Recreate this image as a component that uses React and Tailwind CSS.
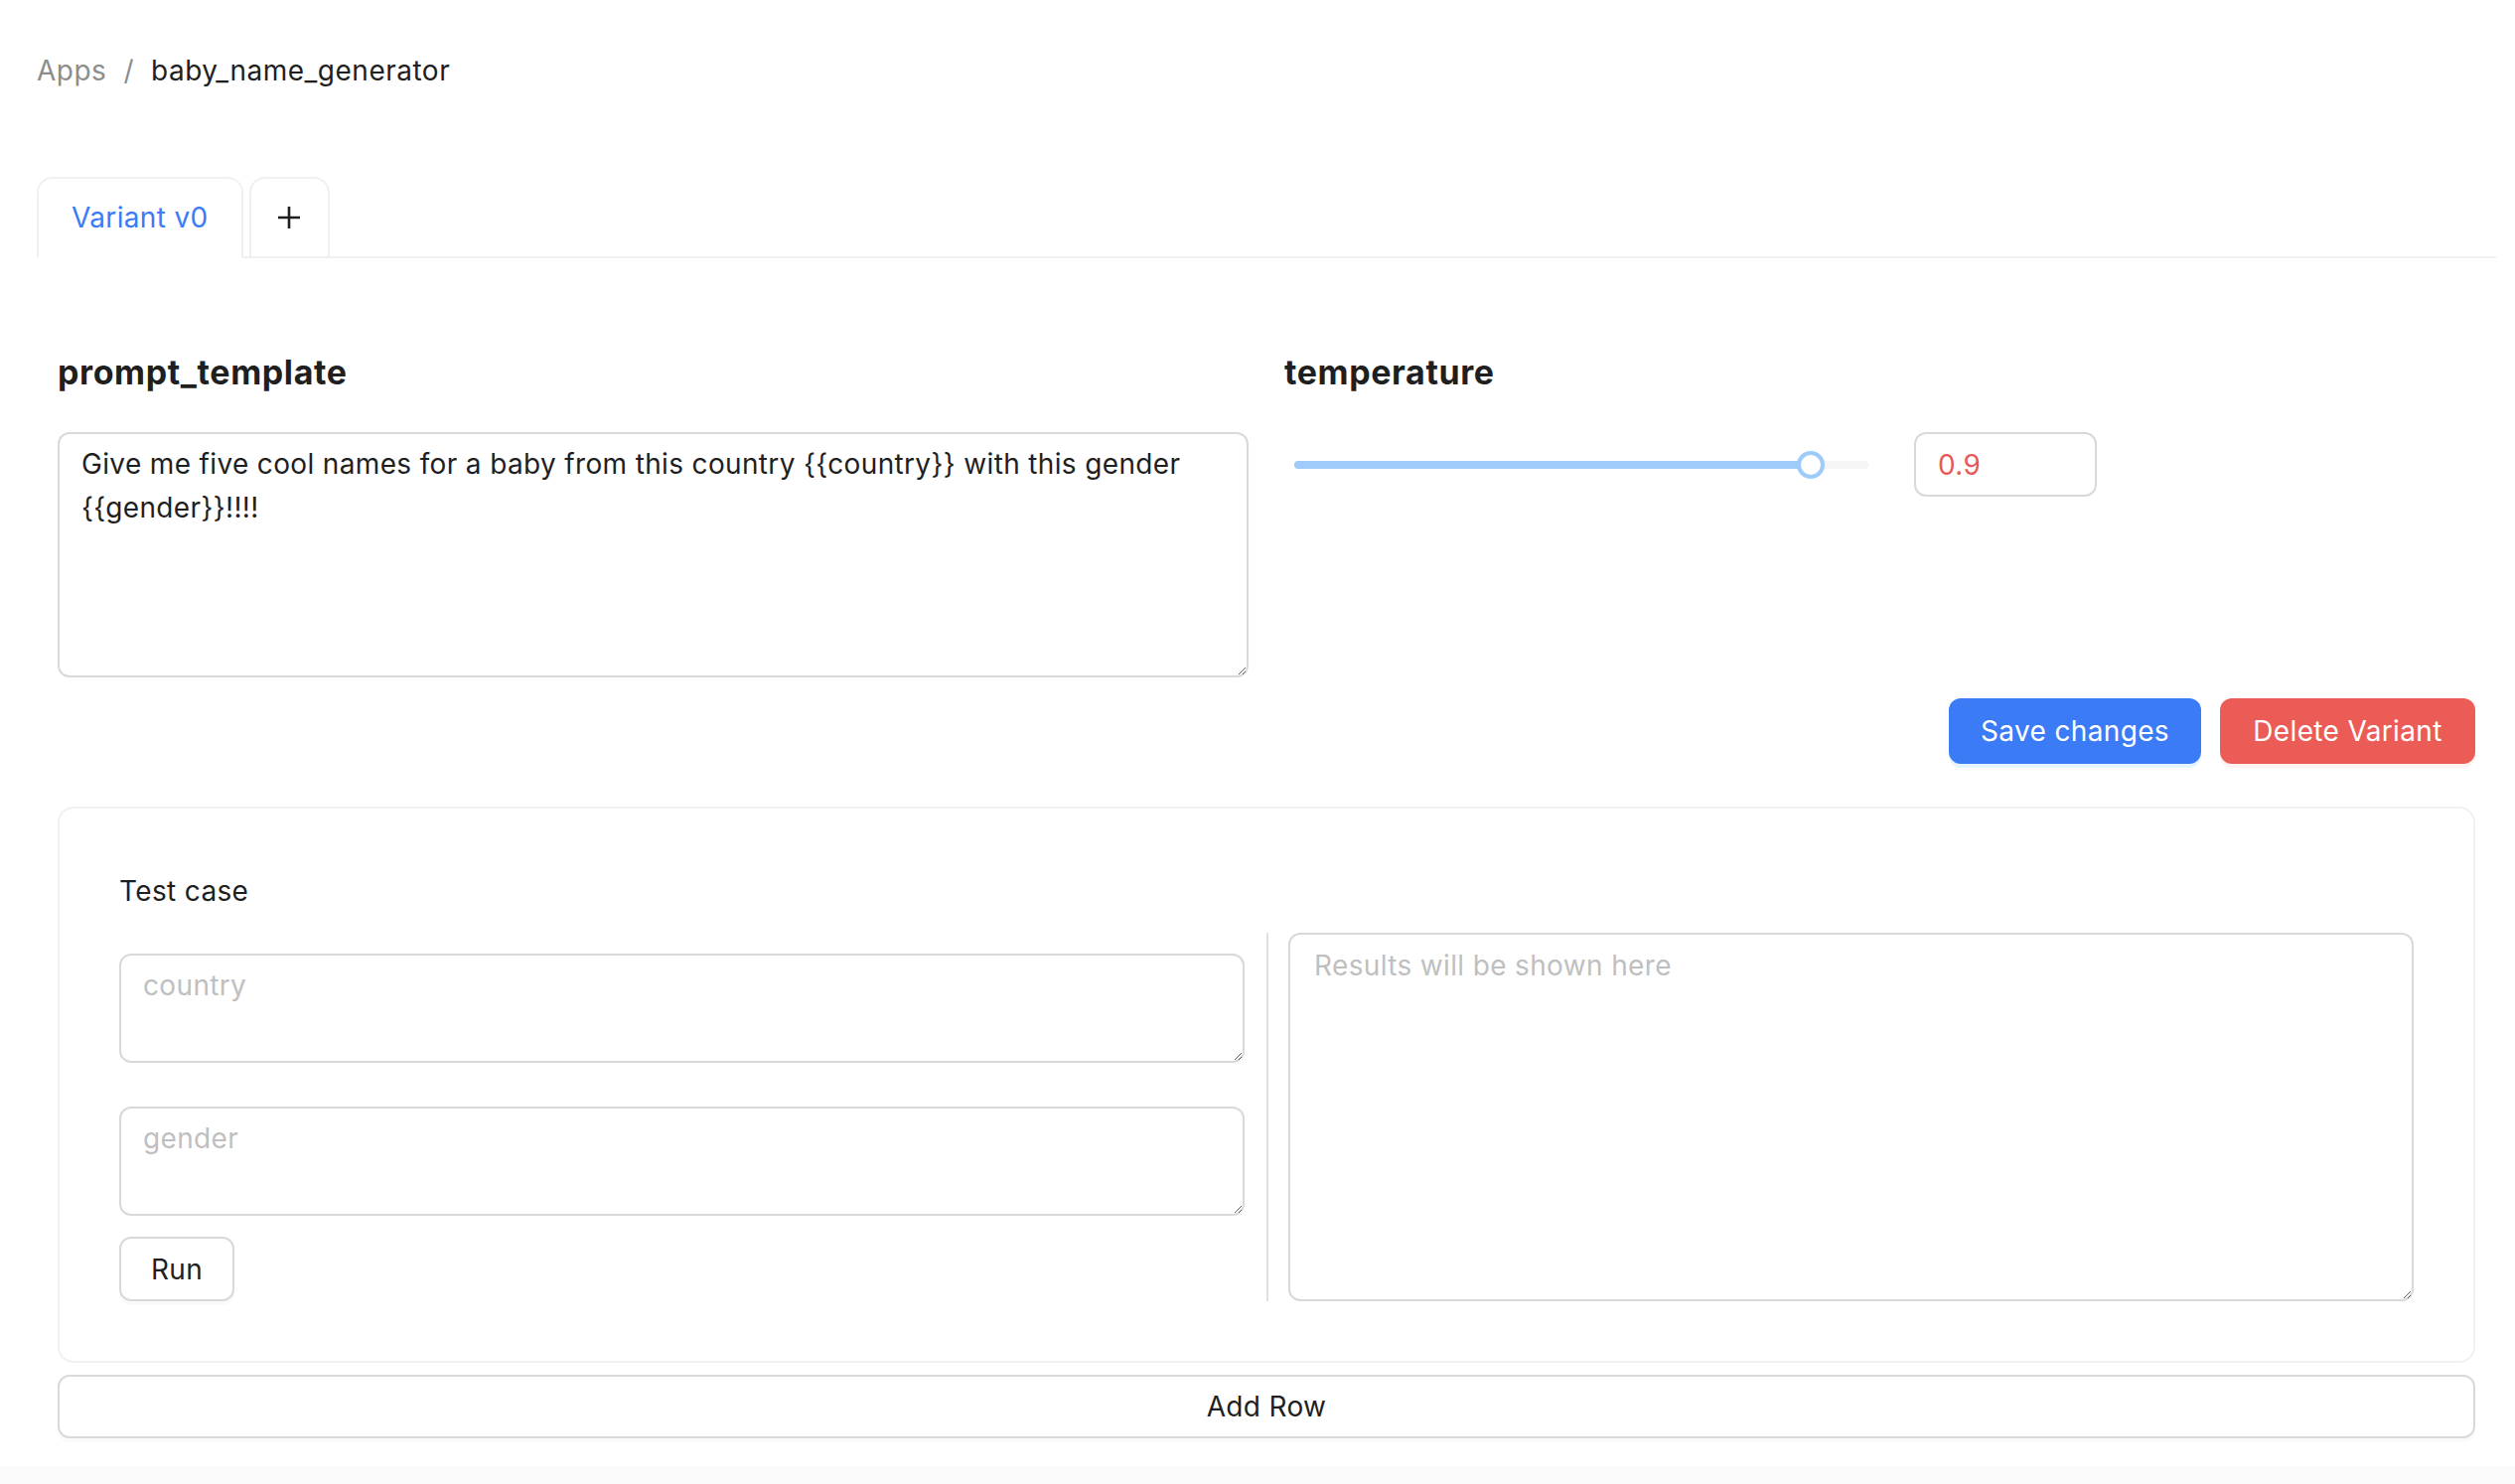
import React from "react";

function Slider({ value }) {
  const pct = value * 100;
  return (
    <div className="w-[598px] h-[65px] px-[10px] flex items-center">
      <div className="relative w-full h-[8px] rounded-full bg-[#f5f5f5]">
        <div className="absolute left-0 top-0 h-full rounded-full bg-[#9ecbfa]" style={{ width: `${pct}%` }} />
        <div
          className="absolute top-1/2 w-[28px] h-[28px] -translate-x-1/2 -translate-y-1/2 rounded-full bg-white border-[4px] border-[#9ecbfa]"
          style={{ left: `${pct}%` }}
        />
      </div>
    </div>
  );
}

export default function App() {
  return (
    <div className="min-h-screen flex flex-col bg-white font-['Inter',sans-serif] text-[28px] leading-[44px] tracking-[0.35px] text-[#1f1f1f]">
      <div className="pl-[37px] pr-[19px] pt-[49px] pb-[28px]">
        {/* Breadcrumb */}
        <div className="flex items-center h-[44px] tracking-[0.5px]">
          <span className="text-[#8c8c8c]">Apps</span>
          <span className="text-[#8c8c8c] mx-[17px]">/</span>
          <span className="text-[#1f1f1f]">baby_name_generator</span>
        </div>

        {/* Tabs */}
        <div className="mt-[85px] flex items-end gap-[6px] border-b-2 border-[#f0f0f0]">
          <div className="-mb-[2px] h-[82px] px-[33px] flex items-center border-2 border-[#f0f0f0] border-b-white rounded-t-[16px] bg-white text-[#3b7bf6]">
            Variant v0
          </div>
          <div className="-mb-[2px] h-[82px] w-[81px] flex items-center justify-center border-2 border-[#f0f0f0] rounded-t-[16px] bg-white">
            <svg width="24" height="24" viewBox="0 0 24 24" fill="none" stroke="#1f1f1f" strokeWidth="2.6">
              <path d="M12 1v22M1 12h22" />
            </svg>
          </div>
        </div>

        {/* Content */}
        <div className="px-[21px] pt-[91px]">
          <div className="grid grid-cols-2 gap-x-[36px]">
            <div>
              <h2 className="text-[34px] leading-[48px] font-bold tracking-[0.6px]">prompt_template</h2>
              <textarea
                className="mt-[36px] block w-full h-[247px] border-2 border-[#d9d9d9] rounded-[12px] px-[22px] py-[8px] text-[28px] leading-[44px] tracking-[0.35px] text-[#1f1f1f] outline-none resize-y font-['Inter',sans-serif]"
                defaultValue="Give me five cool names for a baby from this country {{country}} with this gender {{gender}}!!!!"
              />
            </div>
            <div>
              <h2 className="text-[34px] leading-[48px] font-bold tracking-[0.6px]">temperature</h2>
              <div className="mt-[36px] flex items-center gap-[36px]">
                <Slider value={0.9} />
                <div className="w-[184px] h-[65px] border-2 border-[#d9d9d9] rounded-[12px] px-[22px] flex items-center text-[#e85a5a]">
                  0.9
                </div>
              </div>
            </div>
          </div>

          {/* Buttons */}
          <div className="mt-[21px] flex justify-end gap-[19px]">
            <button className="w-[254px] h-[66px] rounded-[12px] bg-[#3b7bf6] text-white shadow-[0_4px_0_rgba(5,145,255,0.1)]">
              Save changes
            </button>
            <button className="w-[257px] h-[66px] rounded-[12px] bg-[#ec5c57] text-white shadow-[0_4px_0_rgba(255,38,5,0.06)]">
              Delete Variant
            </button>
          </div>

          {/* Test case card */}
          <div className="mt-[43px] border-2 border-[#f0f0f0] rounded-[16px] p-[60px]">
            <div className="pt-[1px]">Test case</div>
            <div className="mt-[20px] flex">
              <div className="w-[1133px] pt-[21px] flex flex-col">
                <textarea
                  placeholder="country"
                  className="block w-full h-[110px] border-2 border-[#d9d9d9] rounded-[12px] px-[22px] py-[8px] text-[28px] leading-[44px] tracking-[0.35px] outline-none resize-y placeholder:text-[#bfbfbf] font-['Inter',sans-serif]"
                />
                <textarea
                  placeholder="gender"
                  className="mt-[44px] block w-full h-[110px] border-2 border-[#d9d9d9] rounded-[12px] px-[22px] py-[8px] text-[28px] leading-[44px] tracking-[0.35px] outline-none resize-y placeholder:text-[#bfbfbf] font-['Inter',sans-serif]"
                />
                <button className="mt-[21px] w-[116px] h-[65px] border-2 border-[#d9d9d9] rounded-[12px] bg-white shadow-[0_4px_0_rgba(0,0,0,0.02)]">
                  Run
                </button>
              </div>
              <div className="ml-[22px] w-[2px] bg-[#e0e0e0]" />
              <textarea
                placeholder="Results will be shown here"
                className="ml-[20px] flex-1 block h-[371px] border-2 border-[#d9d9d9] rounded-[12px] px-[24px] py-[9px] text-[28px] leading-[44px] tracking-[0.35px] outline-none resize-y placeholder:text-[#bfbfbf] font-['Inter',sans-serif]"
              />
            </div>
          </div>

          {/* Add Row */}
          <button className="mt-[12px] w-full h-[64px] border-2 border-[#d9d9d9] rounded-[12px] bg-white shadow-[0_4px_0_rgba(0,0,0,0.02)]">
            Add Row
          </button>
        </div>
      </div>
      <div className="flex-1 bg-[#fafafa]" />
    </div>
  );
}
